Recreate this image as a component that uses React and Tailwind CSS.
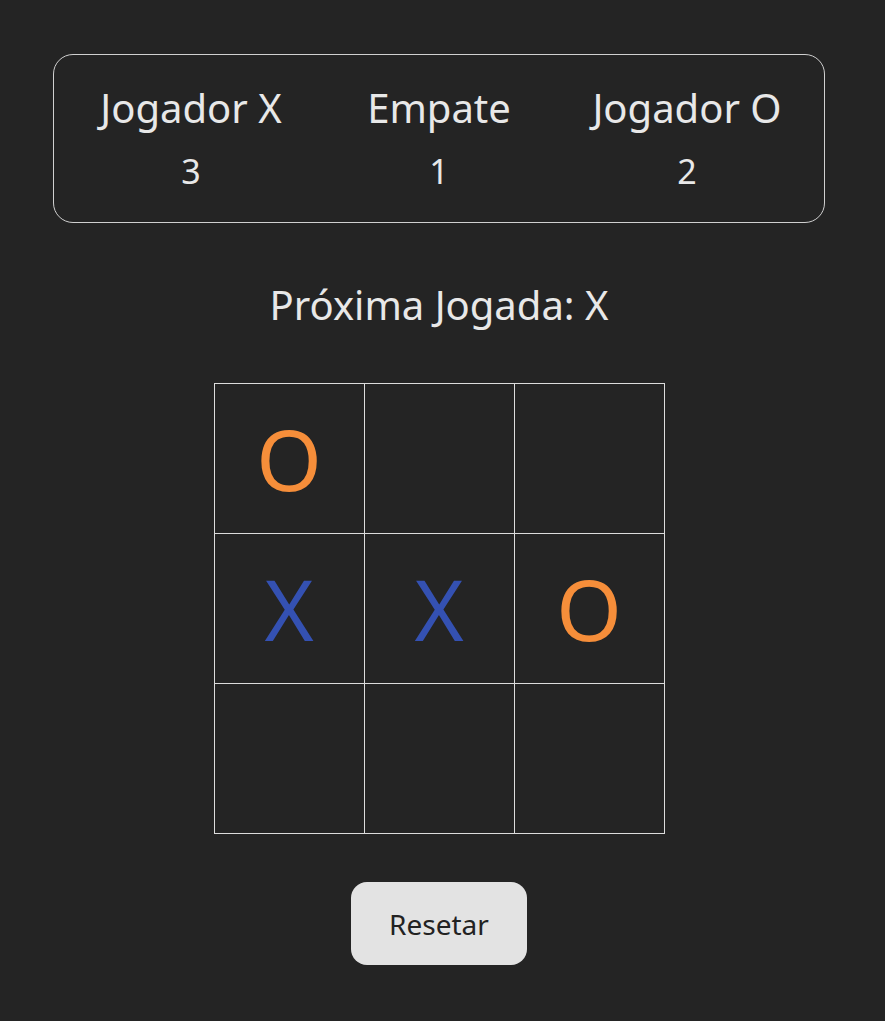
const board = ['O', '', '', 'X', 'X', 'O', '', '', ''];

const scores = [
  { label: 'Jogador X', value: 3 },
  { label: 'Empate', value: 1 },
  { label: 'Jogador O', value: 2 },
];

export default function App() {
  return (
    <div
      className="min-h-screen bg-[#242424] text-[#e8e8e8] flex flex-col items-center pt-[54px] pr-[7px]"
      style={{ fontFamily: '"Noto Sans", "Open Sans", sans-serif' }}
    >
      {/* Placar */}
      <div className="w-[772px] h-[169px] border border-[#d0d0d0] rounded-[20px] grid grid-cols-3 px-[13px] pt-[27px]">
        {scores.map((s) => (
          <div key={s.label} className="flex flex-col items-center">
            <span className="text-[40px] leading-[52px]">{s.label}</span>
            <span className="text-[34px] leading-[46px] mt-[14px]">{s.value}</span>
          </div>
        ))}
      </div>

      <h2 className="text-[40px] leading-[52px] mt-[56px]">Próxima Jogada: X</h2>

      {/* Tabuleiro */}
      <div className="mt-[52px] grid grid-cols-3 gap-px bg-[#dcdcdc] p-px">
        {board.map((v, i) => (
          <div
            key={i}
            className={`w-[149px] h-[149px] bg-[#242424] flex items-center justify-center text-[84px] leading-none ${
              v === 'X' ? 'text-[#3451b2]' : 'text-[#f68e3a]'
            }`}
          >
            {v}
          </div>
        ))}
      </div>

      <button className="mt-[48px] w-[176px] h-[83px] bg-[#e3e3e3] text-[#222] rounded-[16px] text-[28px]">
        Resetar
      </button>
    </div>
  );
}
